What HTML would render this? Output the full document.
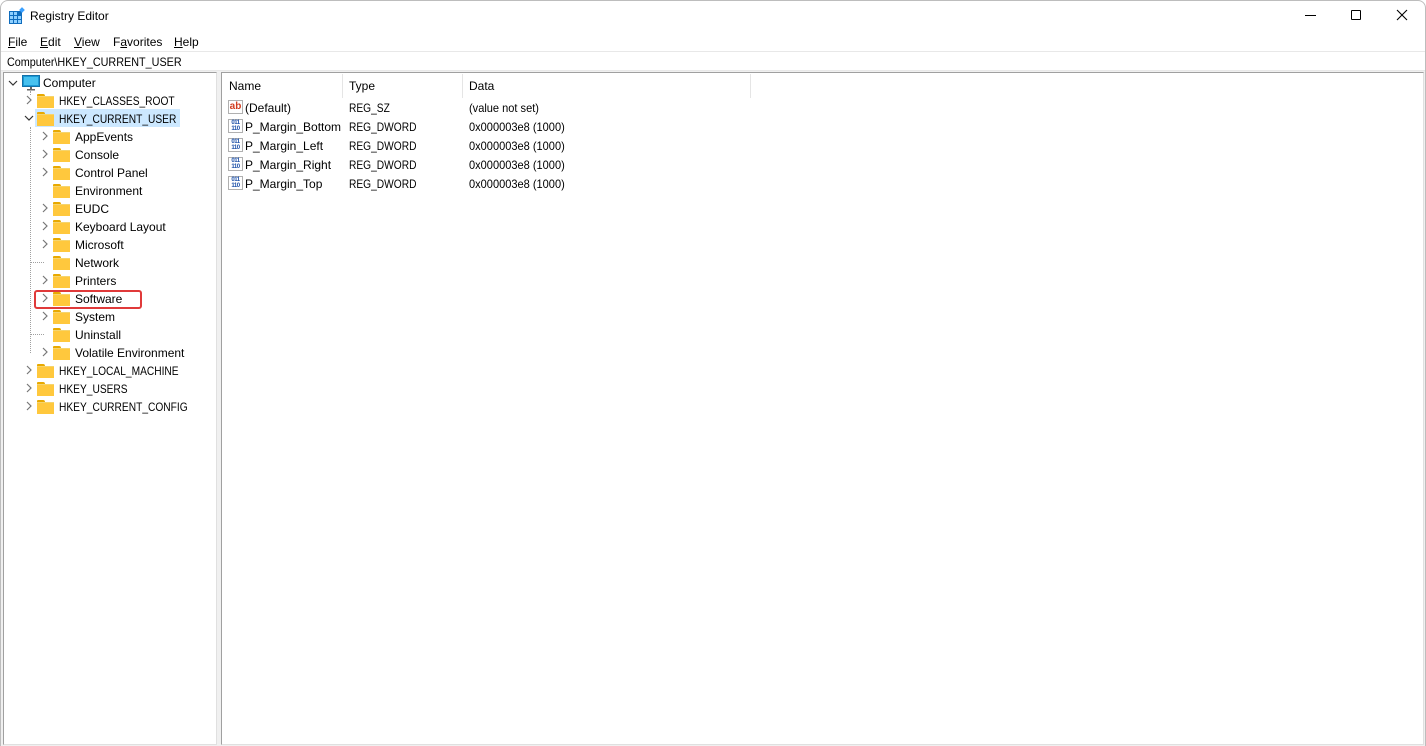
<!DOCTYPE html>
<html><head><meta charset="utf-8"><style>
*{margin:0;padding:0;box-sizing:border-box}
body{width:1426px;height:746px;background:#fff;font-family:"Liberation Sans",sans-serif;font-size:12px;color:#000;position:relative;overflow:hidden}
.a{position:absolute;white-space:nowrap}
.win{position:absolute;left:0;top:0;width:1426px;height:746px;border:1px solid #bdbdbd;border-radius:8px 8px 0 0;background:#fff}
.fold{position:absolute;width:17px;height:13px}
.fold:before{content:"";position:absolute;left:0;top:0;width:8px;height:4px;background:#e8a900;border-radius:1px 2px 0 0}
.fold:after{content:"";position:absolute;left:0;top:2px;width:17px;height:11px;background:#ffc83d;border-top:1px solid #f5d46e}
.t{position:absolute;line-height:18px;white-space:nowrap}
.up{transform:scaleX(0.85);transform-origin:0 0}
</style></head><body>
<div class="win"></div>
<svg class="a" style="left:9px;top:7px" width="17" height="17" viewBox="0 0 17 17">
<rect x="0" y="4" width="13" height="13" fill="#0f6cbd"/>
<g fill="#8fd0ff"><rect x="1" y="5" width="3" height="3"/><rect x="5" y="5" width="3" height="3"/><rect x="1" y="9" width="3" height="3"/><rect x="5" y="9" width="3" height="3"/><rect x="9" y="9" width="3" height="3"/><rect x="1" y="13" width="3" height="3"/><rect x="5" y="13" width="3" height="3"/><rect x="9" y="13" width="3" height="3"/></g>
<rect x="11" y="1" width="4" height="4" fill="#3aa0ff" transform="rotate(45 13 3)"/></svg>
<div class="a" style="left:30px;top:9px;font-size:12px">Registry Editor</div>
<div class="a" style="left:1305px;top:15px;width:11px;height:1px;background:#000"></div>
<div class="a" style="left:1351px;top:10px;width:10px;height:10px;border:1px solid #000;border-radius:1px"></div>
<svg class="a" style="left:1396px;top:9px" width="12" height="12"><path d="M1 1L11 11M11 1L1 11" stroke="#000" stroke-width="1.1"/></svg>
<div class="a" style="top:35px;left:8px"><u>F</u>ile</div>
<div class="a" style="top:35px;left:40px"><u>E</u>dit</div>
<div class="a" style="top:35px;left:74px"><u>V</u>iew</div>
<div class="a" style="top:35px;left:113px">F<u>a</u>vorites</div>
<div class="a" style="top:35px;left:174px"><u>H</u>elp</div>
<div class="a" style="left:1px;top:51px;width:1424px;height:20px;border-top:1px solid #e8e8e8;border-bottom:1px solid #e8e8e8"></div>
<div class="a" style="left:7px;top:55px;transform:scaleX(0.9);transform-origin:0 0">Computer\HKEY_CURRENT_USER</div>
<div class="a" style="left:1px;top:71px;width:1424px;height:675px;background:#f0f0f0"></div>
<div class="a" style="left:3px;top:72px;width:214px;height:673px;background:#fff;border:1px solid #a0a0a0;border-right-color:#e0e0e0;border-bottom-color:#e0e0e0"></div>
<div class="a" style="left:221px;top:72px;width:1203px;height:673px;background:#fff;border:1px solid #a0a0a0;border-right-color:#e0e0e0;border-bottom-color:#e0e0e0"></div>
<div class="a" style="left:30px;top:127px;width:0;height:226px;border-left:1px dotted #a0a0a0"></div>
<div class="a" style="left:30px;top:262px;width:14px;border-top:1px dotted #a0a0a0"></div>
<div class="a" style="left:30px;top:334px;width:14px;border-top:1px dotted #a0a0a0"></div>
<div class="a" style="left:30px;top:91px;width:0;height:4px;border-left:1px dotted #a0a0a0"></div>
<svg class="a" style="left:8px;top:78px" width="10" height="10"><path d="M1 3L5 7L9 3" stroke="#333" fill="none" stroke-width="1.2"/></svg>
<svg class="a" style="left:22px;top:75px" width="18" height="16"><rect x="0.5" y="0.5" width="17" height="11" fill="#1a9ad6" stroke="#1371a8"/><rect x="2" y="2" width="14" height="8" fill="#47c1ef"/><rect x="8" y="12" width="2" height="2" fill="#666"/><rect x="5" y="14" width="8" height="1.5" fill="#666"/></svg>
<div class="t" style="left:43px;top:74px">Computer</div>
<div class="a" style="left:35px;top:109px;width:145px;height:18px;background:#cce8ff"></div>
<div id="tree"></div>
<div class="a" style="left:34px;top:290px;width:108px;height:19px;border:2px solid #e03a3a;border-radius:3px"></div>
<div class="t" style="left:229px;top:77px">Name</div>
<div class="t" style="left:349px;top:77px">Type</div>
<div class="t" style="left:469px;top:77px">Data</div>
<div class="a" style="left:342px;top:74px;width:1px;height:24px;background:#e5e5e5"></div>
<div class="a" style="left:462px;top:74px;width:1px;height:24px;background:#e5e5e5"></div>
<div class="a" style="left:750px;top:74px;width:1px;height:24px;background:#e5e5e5"></div>
<div id="vals"></div>
<script>
var tr=[[0,100,"HKEY_CLASSES_ROOT",1],[0,118,"HKEY_CURRENT_USER",2],
[1,136,"AppEvents",1],[1,154,"Console",1],[1,172,"Control Panel",1],[1,190,"Environment",0],[1,208,"EUDC",1],[1,226,"Keyboard Layout",1],[1,244,"Microsoft",1],[1,262,"Network",0],[1,280,"Printers",1],[1,298,"Software",1],[1,316,"System",1],[1,334,"Uninstall",0],[1,352,"Volatile Environment",1],
[0,370,"HKEY_LOCAL_MACHINE",1],[0,388,"HKEY_USERS",1],[0,406,"HKEY_CURRENT_CONFIG",1]];
var h="";
tr.forEach(function(r){var x=r[0]?45:29,y=r[1];
if(r[3]==1)h+='<svg class="a" style="left:'+(x-5)+'px;top:'+(y-5)+'px" width="10" height="10"><path d="M3 1L7 5L3 9" stroke="#777" fill="none" stroke-width="1.2"/></svg>';
if(r[3]==2)h+='<svg class="a" style="left:'+(x-5)+'px;top:'+(y-5)+'px" width="10" height="10"><path d="M1 3L5 7L9 3" stroke="#333" fill="none" stroke-width="1.2"/></svg>';
h+='<div class="fold" style="left:'+(x+8)+'px;top:'+(y-6)+'px"></div><div class="t'+(r[0]?'':' up')+'" style="left:'+(x+30)+'px;top:'+(y-8)+'px">'+r[2]+'</div>';});
document.getElementById("tree").innerHTML=h;
var v=[["(Default)","REG_SZ","(value not set)",1],["P_Margin_Bottom","REG_DWORD","0x000003e8 (1000)"],["P_Margin_Left","REG_DWORD","0x000003e8 (1000)"],["P_Margin_Right","REG_DWORD","0x000003e8 (1000)"],["P_Margin_Top","REG_DWORD","0x000003e8 (1000)"]];
h="";v.forEach(function(r,i){var y=107+19*i;
if(r[3])h+='<div class="a" style="left:228px;top:'+(y-7)+'px;width:15px;height:14px;border:1px solid #b0b0b0;background:#fff;color:#d13c1f;font-weight:bold;font-size:10px;line-height:11px;text-align:center">ab</div>';
else h+='<div class="a" style="left:228px;top:'+(y-7)+'px;width:15px;height:14px;border:1px solid #b0b0b0;background:#fff;color:#1b4fa8;font-weight:bold;font-size:6px;line-height:6px;letter-spacing:-0.5px;text-align:center">011<br>110</div>';
h+='<div class="t" style="left:245px;top:'+(y-8)+'px">'+r[0]+'</div><div class="t up" style="left:349px;top:'+(y-8)+'px">'+r[1]+'</div><div class="t" style="left:469px;top:'+(y-8)+'px;transform:scaleX(0.92);transform-origin:0 0">'+r[2]+'</div>';});
document.getElementById("vals").innerHTML=h;
</script>
</body></html>
